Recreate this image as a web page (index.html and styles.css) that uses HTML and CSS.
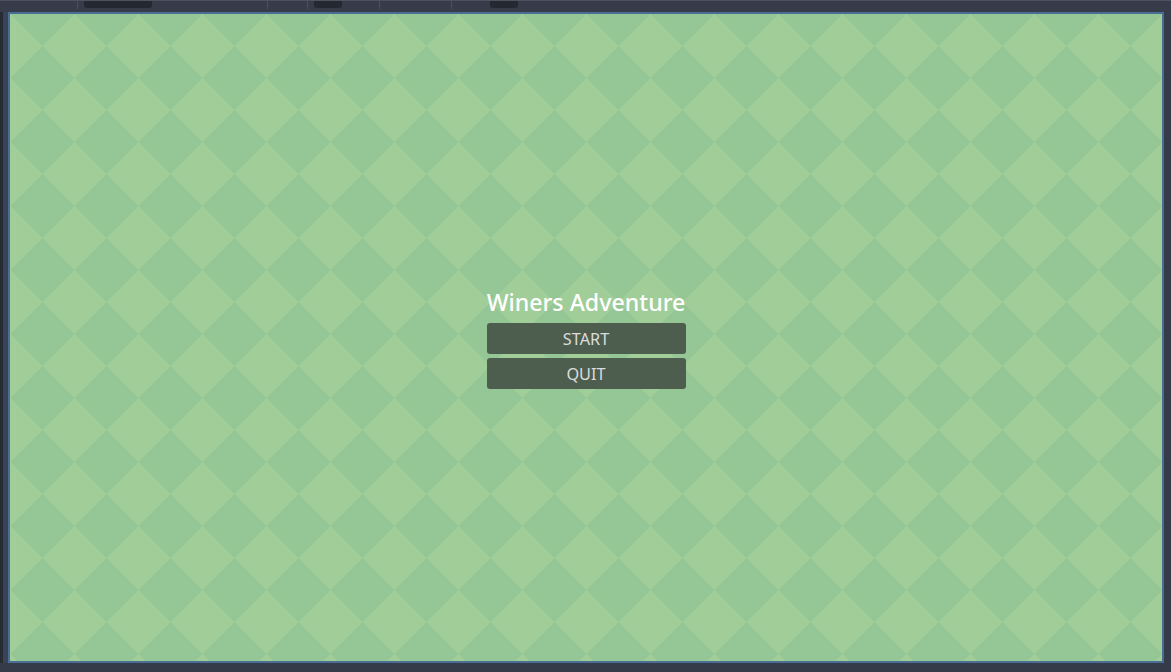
FILE: index.html
```html
<!DOCTYPE html>
<html lang="en">
<head>
<meta charset="utf-8">
<title>Winers Adventure</title>
<link rel="stylesheet" href="styles.css">
</head>
<body>
<div class="editor">
  <div class="topbar">
    <span class="sep s1"></span>
    <span class="tab t1"></span>
    <span class="sep s2"></span>
    <span class="sep s3"></span>
    <span class="tab t2"></span>
    <span class="sep s4"></span>
    <span class="sep s5"></span>
    <span class="tab t3"></span>
  </div>
  <div class="middle">
    <div class="leftstrip"><div class="leftedge"></div><div class="leftpanel"></div></div>
    <div class="viewport">
      <div class="menu">
        <div class="title">Winers Adventure</div>
        <button class="btn">START</button>
        <button class="btn">QUIT</button>
      </div>
    </div>
    <div class="rightstrip"></div>
  </div>
  <div class="bottombar"></div>
</div>
</body>
</html>
```
FILE: styles.css
```css
html, body {
  margin: 0;
  padding: 0;
  background: #353b48;
  width: 1171px;
  height: 672px;
  overflow: hidden;
}

.editor {
  display: flex;
  flex-direction: column;
  width: 1171px;
  height: 672px;
}

.topbar {
  position: relative;
  height: 12px;
  flex: none;
  background: #363c4a;
  border-top: 1px solid #4d525d;
  box-sizing: border-box;
}

.tab {
  position: absolute;
  top: 0;
  height: 7px;
  background: #242931;
  border-radius: 0 0 3px 3px;
}
.t1 { left: 84px; width: 68px; }
.t2 { left: 314px; width: 28px; }
.t3 { left: 490px; width: 28px; }

.sep {
  position: absolute;
  top: 0;
  width: 1px;
  height: 8px;
  background: #4a505c;
}
.s1 { left: 77px; }
.s2 { left: 267px; }
.s3 { left: 307px; }
.s4 { left: 379px; }
.s5 { left: 451px; }

.middle {
  display: flex;
  height: 651px;
  flex: none;
}

.leftstrip {
  width: 8px;
  display: flex;
  flex: none;
}
.leftedge {
  width: 3px;
  background: #262b34;
}
.leftpanel {
  width: 5px;
  background: #394357;
}

.viewport {
  width: 1152px;
  flex: none;
  border: 2px solid #4a6d96;
  display: flex;
  align-items: center;
  justify-content: center;
  padding-top: 4px;
  box-sizing: content-box;
  height: 643px;
  background-color: #a0cd98;
  background-image:
    linear-gradient(135deg, #94c795 25%, transparent 25%),
    linear-gradient(225deg, #94c795 25%, transparent 25%),
    linear-gradient(45deg, #94c795 25%, transparent 25%),
    linear-gradient(315deg, #94c795 25%, transparent 25%);
  background-size: 64px 64px;
  background-position: 32px 0;
}

.rightstrip {
  width: 7px;
  flex: none;
  background: #353b48;
}

.bottombar {
  flex: 1;
  background: #353b48;
}

.menu {
  width: 199px;
  display: flex;
  flex-direction: column;
  gap: 4px;
}

.title {
  font-family: "Noto Sans", "Open Sans", sans-serif;
  font-size: 23.2px;
  font-weight: 500;
  color: #ffffff;
  text-align: center;
  height: 28px;
  line-height: 22px;
  white-space: nowrap;
}

.btn {
  height: 31px;
  width: 199px;
  padding: 1px 0 0;
  border: none;
  border-radius: 3px;
  background: #4e5e4e;
  color: #dcdcdc;
  font-family: "Noto Sans", "Open Sans", sans-serif;
  font-size: 16.3px;
  line-height: 30px;
  text-align: center;
}
```
